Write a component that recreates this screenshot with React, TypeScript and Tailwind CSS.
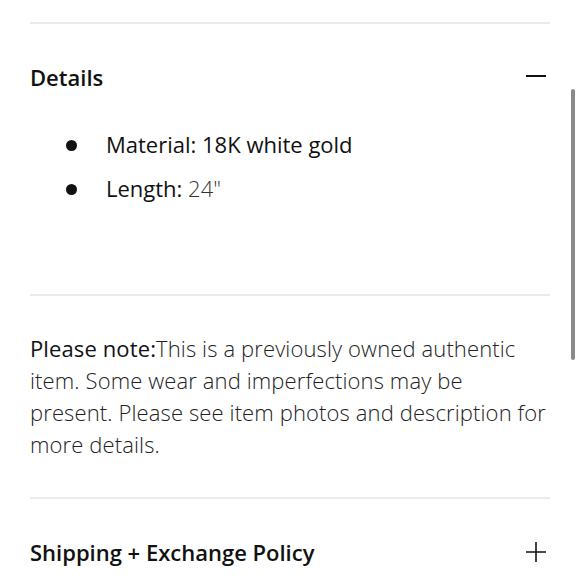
import React from "react";

function MinusIcon() {
  return (
    <svg width="20" height="20" viewBox="0 0 20 20" fill="none" className="mr-[4px] -mt-[3px]">
      <path d="M0 10 H20" stroke="#111111" strokeWidth="2" />
    </svg>
  );
}

function PlusIcon() {
  return (
    <svg width="20" height="20" viewBox="0 0 20 20" fill="none" className="mr-[4px]">
      <path d="M0 10 H20 M10 0 V20" stroke="#111111" strokeWidth="1.6" />
    </svg>
  );
}

const details = [
  { label: "Material:", value: "18K white gold", light: false },
  { label: "Length:", value: '24"', light: true },
];

export default function App() {
  return (
    <div className="relative min-h-screen w-full overflow-hidden bg-white font-['Open_Sans',sans-serif] text-[#111111]">
      <div className="px-[30px] pt-[22px]">
        <section className="border-t-2 border-[#ebebeb]">
          <div className="flex items-center justify-between pt-[38px]">
            <h2 className="text-[22px] font-semibold leading-[30px]">Details</h2>
            <MinusIcon />
          </div>
          <ul className="mt-[30px] pb-[84px]">
            {details.map((d) => (
              <li key={d.label} className="flex items-center text-[22px] leading-[44px]">
                <span className="ml-[36px] mt-[3px] h-[11px] w-[11px] shrink-0 rounded-full bg-[#111111]" />
                <span className="ml-[29px]">
                  {d.label}{" "}
                  <span className={d.light ? "font-light text-[#333333]" : ""}>{d.value}</span>
                </span>
              </li>
            ))}
          </ul>
        </section>

        <section className="border-t-2 border-[#ebebeb] pb-[37px] pt-[36px]">
          <p className="text-[22px] font-light leading-[32px] tracking-[0.12px] text-[#222222]">
            <span className="font-normal text-[#111111]">Please note:</span>This is a previously owned
            authentic item. Some wear and imperfections may be present. Please see item photos and
            description for more details.
          </p>
        </section>

        <section className="border-t-2 border-[#ebebeb]">
          <div className="flex items-center justify-between pt-[38px]">
            <h2 className="text-[22px] font-semibold leading-[30px]">Shipping + Exchange Policy</h2>
            <PlusIcon />
          </div>
        </section>
      </div>

      <div className="absolute left-[571px] top-[89px] h-[271px] w-[4px] rounded-full bg-[#8a8a8a]" />
    </div>
  );
}
